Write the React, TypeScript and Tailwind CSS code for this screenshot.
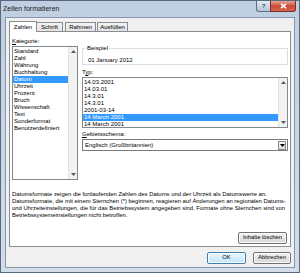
import React from 'react';

const kategorien = [
    'Standard',
    'Zahl',
    'Währung',
    'Buchhaltung',
    'Datum',
    'Uhrzeit',
    'Prozent',
    'Bruch',
    'Wissenschaft',
    'Text',
    'Sonderformat',
    'Benutzerdefiniert',
];

const typen = ['14.03.2001', '14.03.01', '14.3.01', '14.3.01', '2001-03-14', '14 March 2001', '14 March 2001'];

const beschreibung = [
    'Datumsformate zeigen die fortlaufenden Zahlen des Datums und der Uhrzeit als Datumswerte an.',
    'Datumsformate, die mit einem Sternchen (*) beginnen, reagieren auf Änderungen an regionalen Datums-',
    'und Uhrzeiteinstellungen, die für das Betriebssystem angegeben sind. Formate ohne Sternchen sind von',
    'Betriebssystemeinstellungen nicht betroffen.',
];

function ScrollBar() {
    return (
        <div className="flex w-[9px] shrink-0 flex-col items-center justify-between border-l border-[#e3e3e3] bg-[#f2f2f2] py-[3px]">
            <svg width="5" height="3" viewBox="0 0 5 3">
                <path d="M0 3 L2.5 0 L5 3Z" fill="#5a5a5a" />
            </svg>
            <svg width="5" height="3" viewBox="0 0 5 3">
                <path d="M0 0 L2.5 3 L5 0Z" fill="#5a5a5a" />
            </svg>
        </div>
    );
}

function Button({ label, width, isDefault }: { label: string; width: string; isDefault?: boolean }) {
    return (
        <div
            className={`flex h-[12px] items-center justify-center rounded-[2px] border text-[5.8px] leading-none text-black ${width} ${isDefault
                ? 'border-[#3c7fb1] bg-gradient-to-b from-[#eaf6fd] to-[#bee6fd] shadow-[inset_0_0_0_1px_#ffffff]'
                : 'border-[#707070] bg-gradient-to-b from-[#f2f2f2] to-[#d6d6d6] shadow-[inset_0_0_0_1px_#fcfcfc]'
            }`}
        >
            {label}
        </div>
    );
}

export default function App() {
    return (
        <div className="relative h-[273px] w-[300px] border border-[#59687a] bg-gradient-to-b from-[#bfcfe1] to-[#d2dde9] font-['Liberation_Sans',Arial,sans-serif] text-black">
            {/* Titelleiste */}
            <div className="flex h-[16px] items-center pl-[2px] text-[7px] text-[#1b1b1b]">Zellen formatieren</div>
            <div className="absolute right-[3px] top-0 flex h-[11px]">
                <div className="flex w-[14px] items-center justify-center rounded-bl-[3px] border border-r-0 border-t-0 border-[#5e6f84] bg-gradient-to-b from-[#e3eaf2] to-[#b3c4d8] text-[6px] font-bold text-[#3c4a5c]">
                    ?
                </div>
                <div className="flex w-[26px] items-center justify-center rounded-br-[3px] border border-t-0 border-[#7a2f26] bg-gradient-to-b from-[#e7a596] via-[#cc4a37] to-[#d9644c]">
                    <svg width="7" height="6" viewBox="0 0 7 6">
                        <path d="M1 0.8 L6 5.2 M6 0.8 L1 5.2" stroke="#ffffff" strokeWidth="1.6" />
                    </svg>
                </div>
            </div>

            {/* Client-Bereich */}
            <div className="mx-[4px] flex h-[251px] flex-col border border-[#8596ab] bg-[#f0f0f0] px-[3px] pt-[3px]">
                {/* Tabs */}
                <div className="flex h-[10px] items-start text-[6px] leading-none">
                    <div className="relative z-10 flex h-[11px] w-[28px] items-center justify-center border border-b-0 border-[#898c95] bg-white">
                        Zahlen
                    </div>
                    <div className="mt-[1px] flex h-[9px] w-[26px] items-center justify-center border border-b-0 border-l-0 border-[#898c95] bg-gradient-to-b from-[#f3f3f3] to-[#e3e3e3]">
                        Schrift
                    </div>
                    <div className="ml-[2px] mt-[1px] flex h-[9px] w-[31px] items-center justify-center border border-b-0 border-[#898c95] bg-gradient-to-b from-[#f3f3f3] to-[#e3e3e3]">
                        Rahmen
                    </div>
                    <div className="ml-[1px] mt-[1px] flex h-[9px] w-[31px] items-center justify-center border border-b-0 border-[#898c95] bg-gradient-to-b from-[#f3f3f3] to-[#e3e3e3]">
                        Ausfüllen
                    </div>
                </div>

                {/* Tab-Inhalt */}
                <div className="flex h-[216px] flex-col border border-[#898c95] bg-white px-[2px] pt-[6px] text-[6px] leading-[7px]">
                    <div className="flex items-start">
                        {/* Kategorie */}
                        <div className="flex w-[66px] flex-col">
                            <div className="h-[7px]">
                                <span className="underline">K</span>ategorie:
                            </div>
                            <div className="mt-[1px] flex h-[134px] border border-[#828790]">
                                <div className="flex-1 pt-[1px]">
                                    {kategorien.map((k) => (
                                        <div
                                            key={k}
                                            className={`h-[7px] whitespace-nowrap pl-[1px] ${k === 'Datum' ? 'bg-[#3399ff] text-white' : ''}`}
                                        >
                                            {k}
                                        </div>
                                    ))}
                                </div>
                                <ScrollBar />
                            </div>
                        </div>

                        {/* Rechte Spalte */}
                        <div className="ml-[4px] flex w-[206px] flex-col">
                            <div className="relative mt-[10px] h-[17px] border border-[#d5dfe5]">
                                <div className="absolute left-[3px] top-[-4px] bg-white px-[1px]">Beispiel</div>
                                <div className="pl-[5px] pt-[8px]">01 January 2012</div>
                            </div>
                            <div className="mt-[4px] h-[7px]">
                                T<span className="underline">y</span>p:
                            </div>
                            <div className="mt-[1px] flex h-[51px] border border-[#828790]">
                                <div className="flex-1 pt-[1px]">
                                    {typen.map((t, i) => (
                                        <div
                                            key={i}
                                            className={`h-[7px] whitespace-nowrap pl-[1px] ${i === 5 ? 'bg-[#3399ff] text-white' : ''}`}
                                        >
                                            {t}
                                        </div>
                                    ))}
                                </div>
                                <ScrollBar />
                            </div>
                            <div className="mt-[3px] h-[7px]">
                                <span className="underline">G</span>ebietsschema:
                            </div>
                            <div className="mt-[1px] flex h-[12px] items-center border border-[#7a7a7a] pl-[2px]">
                                <div className="flex-1 whitespace-nowrap">Englisch (Großbritannien)</div>
                                <div className="mr-[1px] flex h-[9px] w-[8px] items-center justify-center border border-[#8b8b8b] bg-gradient-to-b from-[#f5f5f5] to-[#dcdcdc]">
                                    <svg width="5" height="3" viewBox="0 0 5 3">
                                        <path d="M0 0 L2.5 3 L5 0Z" fill="#000000" />
                                    </svg>
                                </div>
                            </div>
                        </div>
                    </div>

                    {/* Beschreibung */}
                    <div className="mt-[11px] text-[5.9px] leading-[7px]">
                        {beschreibung.map((z) => (
                            <div key={z} className="whitespace-nowrap">
                                {z}
                            </div>
                        ))}
                    </div>

                    <div className="mr-[1px] mt-[13px] flex justify-end">
                        <Button label="Inhalte löschen" width="w-[49px]" />
                    </div>
                </div>

                {/* Dialog-Buttons */}
                <div className="mt-[5px] flex justify-end gap-[7px]">
                    <Button label="OK" width="w-[39px]" isDefault />
                    <Button label="Abbrechen" width="w-[38px]" />
                </div>
            </div>
        </div>
    );
}
